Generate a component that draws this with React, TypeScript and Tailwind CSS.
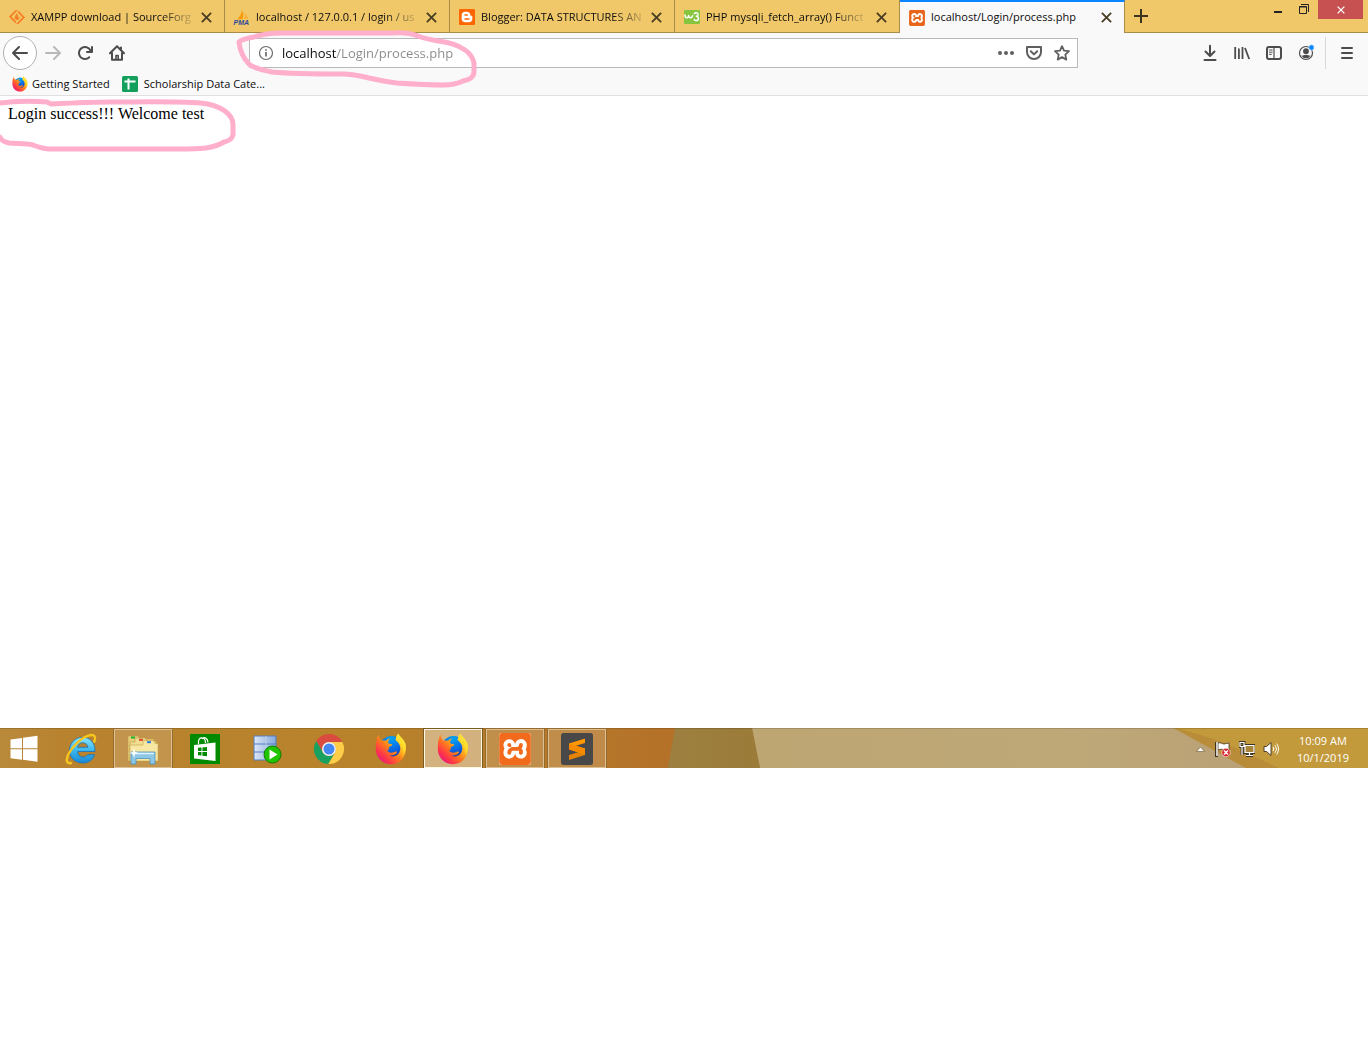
import type { ReactNode } from "react";
import { SiBlogger, SiSourceforge, SiXampp } from "react-icons/si";

function FirefoxLogo({ id, className }: { id: string; className: string }) {
  return (
    <svg viewBox="0 0 32 32" className={className} aria-hidden="true">
      <defs>
        <linearGradient id={`${id}-flame`} x1="0.9" y1="0.05" x2="0.1" y2="0.9">
          <stop offset="0" stopColor="#fff44f" />
          <stop offset="0.3" stopColor="#ffc321" />
          <stop offset="0.55" stopColor="#ff7a1c" />
          <stop offset="0.8" stopColor="#ff3647" />
          <stop offset="1" stopColor="#e31587" />
        </linearGradient>
        <radialGradient id={`${id}-globe`} cx="0.5" cy="0.1" r="0.9">
          <stop offset="0" stopColor="#00a5f5" />
          <stop offset="0.6" stopColor="#0a63e0" />
          <stop offset="1" stopColor="#1b2a8f" />
        </radialGradient>
      </defs>
      <circle cx="16.5" cy="14.5" r="11.5" fill={`url(#${id}-globe)`} />
      <path
        fill={`url(#${id}-flame)`}
        d="M3.5 1.500C4 4.500 5 6.500 6.500 7.700 8.500 7.300 10 7.500 11 7.800 12 6 14 5.500 15 5.500 13.200 7 13 9.500 13.500 10.500 15 11 17.300 11 17.300 11.700 17.300 13 14.200 13.500 13.700 14.500 14 16 14 17 12.200 17.600 13.500 20 17 20.200 19 19 20.500 18 22 18.500 22 19.300 21 22 17 23 14.500 22.500 19 25 24.800 22 25.300 16 25.500 11 22.500 9 20.500 7 21 4 21.500 2.500 23.300.600 24.500 4 29 6 30.500 11 32.500 20 27.500 31.200 16 31.200 7 31.200.800 24 .800 16 .800 11 1 6 3.500 1.500Z"
      />
      <path fill="#ffe12d" opacity="0.75" d="M23.300.600C24.500 4 29 6 30.500 11c.8 4-.2 8-2 11 .5-6-1-10-4-12.500-2-1.500-3.500-5-1.200-8.900Z" />
    </svg>
  );
}

function XamppLogo({ className }: { className: string }) {
  return (
    <span className="flex rounded-[3px] bg-white" aria-hidden="true">
      <SiXampp className={className} />
    </span>
  );
}

function PmaLogo() {
  return (
    <svg viewBox="0 0 16 16" className="size-4 shrink-0 overflow-visible" aria-hidden="true">
      <path fill="#f89c0e" d="M8 1c1.500 3 1.500 6 .8 9L3 10.500C5.500 8 7.500 5 8 1Z" />
      <path fill="#fbb03b" d="M10 3.500c2 2 3.500 4 4.500 6.200L10 10c.7-2 .6-4.500 0-6.500Z" />
      <text x="-0.5" y="16" fontSize="7" fontWeight="700" fontStyle="italic" fill="#2f4a9c" fontFamily="Liberation Sans, sans-serif">
        PMA
      </text>
    </svg>
  );
}

function W3Logo() {
  return (
    <svg viewBox="0 0 16 16" className="size-4 shrink-0" aria-hidden="true">
      <rect y="1" width="16" height="14" rx="1" fill="#87c540" />
      <path
        fill="none"
        stroke="#fff"
        strokeWidth="1.5"
        strokeLinecap="round"
        strokeLinejoin="round"
        d="M1 6c0 3.500 3.300 3.500 3.600.5.2 3 3.600 3 4 .2M10.300 4.600c1.600-1.800 4.400-.6 3.700 1.400-.3.700-1 1.100-1.700 1.200 2.800.2 2.800 4.200.2 4.400-1.100.1-1.900-.4-2.200-1.200"
      />
    </svg>
  );
}

const CloseMark = ({ className }: { className: string }) => (
  <svg viewBox="0 0 10 10" className={className} aria-hidden="true">
    <path d="M.8.800 9.200 9.200M9.200.8.800 9.200" stroke="currentColor" strokeWidth="1.7" fill="none" />
  </svg>
);

type Tab = { title: string; icon: ReactNode; active?: boolean };

const tabs: Tab[] = [
  { title: "XAMPP download | SourceForg", icon: <SiSourceforge className="size-4 shrink-0 text-[#f58025]" /> },
  { title: "localhost / 127.0.0.1 / login / us", icon: <PmaLogo /> },
  {
    title: "Blogger: DATA STRUCTURES AN",
    icon: (
      <span className="flex rounded bg-white">
        <SiBlogger className="size-4 shrink-0 text-[#ff6600]" />
      </span>
    ),
  },
  { title: "PHP mysqli_fetch_array() Funct", icon: <W3Logo /> },
  { title: "localhost/Login/process.php", icon: <XamppLogo className="size-4 text-[#e8641b]" />, active: true },
];

function TabStrip() {
  return (
    <header className="flex h-[33px] bg-[#f0c869]">
      <div role="tablist" aria-label="Open tabs" className="flex min-w-0">
        {tabs.map((tab) => (
          <div
            key={tab.title}
            className={
              tab.active
                ? "flex w-[225px] items-center border-t-2 border-r border-t-[#0a84ff] border-r-[#a88c4a] bg-[#f9f9fa] pr-3 pl-[9px]"
                : "flex w-[225px] items-center border-r border-b border-[#a88c4a] pt-[2px] pr-3 pl-[9px]"
            }
          >
            <button role="tab" aria-selected={!!tab.active} className="flex min-w-0 flex-1 items-center gap-1.5">
              {tab.icon}
              <span
                className={
                  tab.active
                    ? "text-left text-[11px] whitespace-nowrap"
                    : "bg-[linear-gradient(to_right,#0c0c0d_calc(100%-30px),#c3a55c)] bg-clip-text text-left text-[11px] whitespace-nowrap text-transparent"
                }
              >
                {tab.title}
              </span>
            </button>
            <button aria-label={`Close ${tab.title}`} className="ml-1.5 text-[#4a3f24]">
              <CloseMark className="size-[11px]" />
            </button>
          </div>
        ))}
      </div>
      <div className="flex flex-1 justify-between border-b border-[#a88c4a]">
        <button aria-label="New tab" className="px-[9px] text-[#3c3420]">
          <svg viewBox="0 0 14 14" className="size-3.5" aria-hidden="true">
            <path d="M7 0v14M0 7h14" stroke="currentColor" strokeWidth="2" />
          </svg>
        </button>
        <div className="flex items-start pr-[5px]">
          <button aria-label="Minimize" className="flex h-5 w-[26px] items-center justify-center pt-[3px]">
            <span className="h-[2px] w-2 bg-[#222]" />
          </button>
          <button aria-label="Restore" className="flex h-[18px] w-[26px] items-center justify-center">
            <svg viewBox="0 0 10 10" className="size-2.5" aria-hidden="true">
              <path d="M2 .5h7.500V8M.5 2.500h7v7h-7zM.5 3h7" fill="none" stroke="#222" />
            </svg>
          </button>
          <button aria-label="Close window" className="ml-[1px] flex h-[19px] w-[45px] items-center justify-center bg-[#c75050] text-white">
            <CloseMark className="size-2" />
          </button>
        </div>
      </div>
    </header>
  );
}

function ToolButton({ label, children }: { label: string; children: ReactNode }) {
  return (
    <button aria-label={label} className="flex size-8 shrink-0 items-center justify-center text-[#4c4c4d]">
      <svg viewBox="0 0 16 16" className="size-4 overflow-visible" fill="none" stroke="currentColor" strokeWidth="2" strokeLinecap="round" strokeLinejoin="round" aria-hidden="true">
        {children}
      </svg>
    </button>
  );
}

function Toolbar() {
  return (
    <div className="flex h-10 items-center pr-[5px] pl-[3px]">
      <button aria-label="Back" className="flex size-[34px] shrink-0 items-center justify-center rounded-full border border-[#b1b1b1] bg-white text-[#4c4c4d]">
        <svg viewBox="0 0 16 16" className="size-4" fill="currentColor" aria-hidden="true">
          <path d="M15 7H3.414l4.293-4.293a1 1 0 0 0-1.414-1.414l-6 6a1 1 0 0 0 0 1.414l6 6a1 1 0 0 0 1.414-1.414L3.414 9H15a1 1 0 0 0 0-2z" />
        </svg>
      </button>
      <button aria-label="Forward" disabled className="flex size-8 shrink-0 items-center justify-center text-[#b9b9ba]">
        <svg viewBox="0 0 16 16" className="size-4" fill="currentColor" aria-hidden="true">
          <path d="M15.707 7.293l-6-6a1 1 0 0 0-1.414 1.414L12.586 7H1a1 1 0 0 0 0 2h11.586l-4.293 4.293a1 1 0 1 0 1.414 1.414l6-6a1 1 0 0 0 0-1.414z" />
        </svg>
      </button>
      <ToolButton label="Reload">
        <path
          fill="currentColor"
          stroke="none"
          d="M15 1a1 1 0 0 0-1 1v2.418A6.995 6.995 0 1 0 8 15a6.954 6.954 0 0 0 4.950-2.050 1 1 0 0 0-1.414-1.414A5.019 5.019 0 1 1 12.549 6H10a1 1 0 0 0 0 2h5a1 1 0 0 0 1-1V2a1 1 0 0 0-1-1z"
        />
      </ToolButton>
      <ToolButton label="Home">
        <path d="M1 8.300 8 1.300l7 7M3 8v6.800h10V8M12 2.500v2" />
        <path d="M7 14.500v-4h2.200v4" strokeWidth="1.600" />
      </ToolButton>
      <div className="flex-[118]" />
      <form className="flex h-[30px] min-w-0 flex-[827] items-center border border-[#b9b9ba] bg-white pr-[7px] pl-2" onSubmit={(e) => e.preventDefault()}>
        <button type="button" aria-label="Site information" className="mr-2 text-[#6a6a6b]">
          <svg viewBox="0 0 16 16" className="size-4" fill="none" stroke="currentColor" aria-hidden="true">
            <circle cx="8" cy="8" r="6.500" strokeWidth="1.200" />
            <path d="M8 7v4.500M8 4.200v1.600" strokeWidth="1.700" />
          </svg>
        </button>
        <input
          aria-label="Address"
          defaultValue="localhost/Login/process.php"
          className="min-w-0 flex-1 bg-[linear-gradient(90deg,#0c0c0d_54px,#8a8a8c_54px)] bg-clip-text pt-[2px] text-[13px] text-transparent caret-black outline-none"
        />
        <div className="flex items-center gap-3 text-[#5f5f60]">
          <button type="button" aria-label="Page actions">
            <svg viewBox="0 0 16 16" className="size-4" fill="currentColor" aria-hidden="true">
              <circle cx="2" cy="8" r="2" />
              <circle cx="8" cy="8" r="2" />
              <circle cx="14" cy="8" r="2" />
            </svg>
          </button>
          <button type="button" aria-label="Save to Pocket">
            <svg viewBox="0 0 16 16" className="size-4" fill="none" stroke="currentColor" strokeWidth="2" strokeLinecap="round" strokeLinejoin="round" aria-hidden="true">
              <path d="M1 2h14v5a7 7 0 0 1-14 0zM4.800 6.300 8 9.400l3.200-3.100" />
            </svg>
          </button>
          <button type="button" aria-label="Bookmark this page">
            <svg viewBox="0 0 16 16" className="size-4" fill="none" stroke="currentColor" strokeWidth="1.800" strokeLinejoin="round" aria-hidden="true">
              <path d="m8 1.200 2 4.500 5 .5-3.700 3.400 1 5L8 12.100l-4.300 2.500 1-5L1 6.200l5-.5z" />
            </svg>
          </button>
        </div>
      </form>
      <div className="flex-[118]" />
      <ToolButton label="Downloads">
        <path d="M8 .800v9.500M3.500 6.500 8 11l4.500-4.500M2.500 15h11" />
      </ToolButton>
      <ToolButton label="Library">
        <path d="M1.200 2v12M4.900 3.500V14M8.500 2v12M11 3l4.200 11" strokeWidth="1.800" strokeLinecap="butt" />
      </ToolButton>
      <ToolButton label="Sidebars">
        <rect x="1" y="2" width="14" height="12" rx="2" />
        <path d="M8 2v12" strokeWidth="1.200" />
        <path d="M3.500 5h2.700M3.500 7.200h2.700M3.500 9.400h1.800" strokeWidth="1" />
      </ToolButton>
      <ToolButton label="Account">
        <circle cx="8" cy="8" r="6.500" strokeWidth="1.200" />
        <circle cx="8" cy="6.200" r="2.900" fill="currentColor" stroke="none" />
        <path d="M3.300 10.500c1.300.6 2.500-.8 4.700-.8s3.400 1.400 4.700.8a5.400 5.400 0 0 1-9.400 0z" fill="currentColor" stroke="none" />
        <circle cx="13.500" cy="2.500" r="2.700" fill="#0a84ff" stroke="#f9f9fa" strokeWidth="0.500" />
      </ToolButton>
      <div className="mr-[5px] ml-[3px] h-8 w-px bg-[#d7d7d8]" />
      <ToolButton label="Menu">
        <path d="M3 3h10M3 8h10M3 13h10" />
      </ToolButton>
    </div>
  );
}

function Bookmarks() {
  return (
    <nav aria-label="Bookmarks" className="flex h-[22px] items-center gap-3 px-3 text-[11px]">
      <a href="#getting-started" className="flex items-center gap-1">
        <FirefoxLogo id="bm" className="size-4" />
        Getting Started
      </a>
      <a href="#scholarship" className="flex items-center gap-1.5">
        <svg viewBox="0 0 16 16" className="size-4" aria-hidden="true">
          <rect width="16" height="16" rx="1.500" fill="#12a05c" />
          <path d="M2.500 5.500h11M6.500 2.500v11" stroke="#fff" strokeWidth="2" />
        </svg>
        Scholarship Data Cate...
      </a>
    </nav>
  );
}

function Annotations() {
  return (
    <svg viewBox="0 0 480 160" className="pointer-events-none absolute top-0 left-0 h-[160px] w-[480px]" fill="none" stroke="#ffaecb" strokeWidth="5" strokeLinecap="round" strokeLinejoin="round" aria-hidden="true">
      <path d="M239 42c3-3 9-4 15-5 9-3 18-4 27-4h112c10-1 18 0 25 3 8 3 14 4 20 5 10 1 20 4 27 9 6 4 8 8 9 13v9c0 5-5 8-11 9-6 3-12 4-20 4-15 0-31-1-46-2-10-1-19-3-28-5-8-2-17-4-27-4-24 0-49 0-70-2-10-2-19-4-23-8-6-6-9-13-10-22z" />
      <path d="M0 103c15-2 31-2 47-1l4 2c20-1 40-2 60-2 30 0 62-1 90 1 11 1 18 4 24 8 5 4 8 8 8 13v11c-1 4-4 6-9 7-5 3-11 5-18 6-9 1-18 1-27 1H50c-7 0-12-2-17-4-8-2-16-1-24-2-5-1-8-3-9-6" />
    </svg>
  );
}

const Windows = (
  <svg viewBox="0 0 28 28" className="size-7" fill="#fff" aria-hidden="true">
    <path d="M.5 4.500 12 3v10.300H.5zM13 2.800 27.500.8v12.500H13zM.5 14.300H12V24.700L.5 23.200zM13 14.300h14.500v12.400L13 24.800z" />
  </svg>
);

const Explorer = (
  <svg viewBox="0 0 34 32" className="h-8 w-[34px]" aria-hidden="true">
    <path d="M2 3h10l2 3h14v22H2z" fill="#e9cf7c" stroke="#b9993f" strokeWidth=".6" />
    <path d="M5 3.500h4v2H5z" fill="#16b32c" />
    <path d="M9 5h10l2 3h9v20H4V9h5z" fill="#f3dd90" stroke="#b9993f" strokeWidth=".6" />
    <path d="M13 5.800h4v2h-4z" fill="#d9452b" />
    <path d="M17 7.500h10l2 3h3V28H4V12h13z" fill="#f8e7a2" stroke="#c3a34a" strokeWidth=".6" />
    <path d="M21 8.200h4v2h-4z" fill="#2d7fd8" />
    <path d="M5 19h24v12h-5v-5.500H10V31H5z" fill="#8ec6e6" stroke="#4c93bf" strokeWidth=".8" />
    <path d="M6 20.500h22" stroke="#dff3fc" strokeWidth="1.500" />
    <path d="m8 15 1 4 4 1-4 1-1 4-1-4-4-1 4-1z" fill="#fff" />
  </svg>
);

const InternetExplorer = (
  <svg viewBox="0 0 32 32" className="size-8" fill="none" aria-hidden="true">
    <defs>
      <linearGradient id="ie-blue" x1="0" y1="0" x2="0" y2="1">
        <stop offset="0" stopColor="#8be6fb" />
        <stop offset="0.5" stopColor="#3cb8ee" />
        <stop offset="1" stopColor="#1a87d4" />
      </linearGradient>
    </defs>
    <path
      d="M30 18.500H12.500c.3 3.500 2.500 5.500 5.500 5.500 2.200 0 3.600-.8 4.500-2.300h7C28 27 23.500 30 17.800 30 10 30 4.500 24.700 4.500 17.500S10 4.300 17.500 4.300 30.300 9.800 30 18.500ZM12.600 14.300h10.300c-.3-2.700-2.300-4.500-5.200-4.500s-4.700 1.800-5.100 4.500Z"
      fill="url(#ie-blue)"
      stroke="#1672b8"
      strokeWidth=".8"
    />
    <path d="M6 30c-4.500 1-5.500-3-2.500-9C7.500 13 17 4 25 2.200c5-1 6 2 4.200 6.500" stroke="#f8c51d" strokeWidth="2.400" strokeLinecap="round" />
  </svg>
);

const Store = (
  <svg viewBox="0 0 30 30" className="size-[30px]" aria-hidden="true">
    <path fill="#008a00" d="M0 0h30v30H0z" />
    <path d="M8.500 10C8 5 10 3.500 12.500 4c2.500.5 3 2.500 3 5M12 5c2-2.500 6-1 6 3.500" fill="none" stroke="#fff" strokeWidth="1.200" />
    <path fill="#fff" d="M4 11 25.500 8.500V27L4 24.500z" />
    <path fill="#008a00" d="m8 13.800 3.500-.3v3.600H8zM12.400 13.400l4.600-.4v4.100h-4.600zM8 18h3.500v3.600L8 21.300zM12.400 18H17v4.200l-4.600-.5z" />
  </svg>
);

const SqlServer = (
  <svg viewBox="0 0 30 30" className="size-[30px]" aria-hidden="true">
    <defs>
      <linearGradient id="db" x1="0" x2="1">
        <stop offset="0" stopColor="#dce6f5" />
        <stop offset="1" stopColor="#84a9dc" />
      </linearGradient>
    </defs>
    <path d="M2 2h22v24H2z" fill="url(#db)" stroke="#537fc0" />
    <path d="M2 10h22M2 18h22" stroke="#537fc0" strokeWidth="1.200" />
    <path d="M14 2v24" stroke="#c4d4ec" strokeWidth=".8" />
    <circle cx="20.500" cy="20.500" r="8.500" fill="#1fc500" stroke="#0e7c04" />
    <path d="M17.500 15.500v10l8-5z" fill="#fff" />
  </svg>
);

const Chrome = (
  <svg viewBox="0 0 32 32" className="size-8" aria-hidden="true">
    <path fill="#db4a3f" d="M16 9H29.270A15 15 0 0 0 3.300 8L9.940 19.500A7 7 0 0 1 16 9Z" />
    <path fill="#1aa15f" d="M9.940 19.500 3.300 8A15 15 0 0 0 15.400 31L22.060 19.500A7 7 0 0 1 9.940 19.500Z" />
    <path fill="#ffce48" d="M22.060 19.500 15.400 31A15 15 0 0 0 29.270 9H16A7 7 0 0 1 22.060 19.500Z" />
    <circle cx="16" cy="16" r="7" fill="#f2f2f2" />
    <circle cx="16" cy="16" r="5.500" fill="#4587f3" />
  </svg>
);

const Sublime = (
  <svg viewBox="0 0 32 32" className="size-8" aria-hidden="true">
    <rect width="32" height="32" rx="2.500" fill="#484848" />
    <path fill="#ff9800" d="M24 5.500 8 10.500v6l16 5v-6l-9-2.800 9-2.700z" />
    <path fill="#f58a00" d="m8 16.500 9 2.800-9 2.700v5l16-5v-6.500L8 10.500z" opacity=".9" />
    <path fill="#484848" d="m24 10.500-7 2.200 7 2.200zM8 17v4.500l7-2.200z" />
  </svg>
);

type App = { name: string; icon: ReactNode; state: "idle" | "open" | "active" };

const apps: App[] = [
  { name: "Internet Explorer", icon: InternetExplorer, state: "idle" },
  { name: "File Explorer", icon: Explorer, state: "open" },
  { name: "Store", icon: Store, state: "idle" },
  { name: "Database", icon: SqlServer, state: "idle" },
  { name: "Chrome", icon: Chrome, state: "idle" },
  { name: "Firefox", icon: <FirefoxLogo id="ff1" className="size-8" />, state: "idle" },
  { name: "Firefox window", icon: <FirefoxLogo id="ff2" className="size-8" />, state: "active" },
  { name: "XAMPP Control Panel", icon: <XamppLogo className="size-8 text-[#f26a1b]" />, state: "open" },
  { name: "Sublime Text", icon: Sublime, state: "open" },
];

const appStyles = {
  idle: "flex h-[39px] w-[58px] items-center justify-center",
  open: "flex h-[39px] w-[58px] items-center justify-center border border-[#dcbf92] bg-white/15 outline outline-[#966b2b]",
  active: "flex h-[39px] w-[58px] items-center justify-center border border-[#fff6e4] bg-white/40 outline outline-[#7d5a22]",
};

function Wallpaper() {
  return (
    <svg viewBox="0 0 1366 40" preserveAspectRatio="none" className="absolute inset-0 size-full" aria-hidden="true">
      <defs>
        <linearGradient id="w-left">
          <stop offset="0" stopColor="#b98a3b" />
          <stop offset="0.09" stopColor="#b8822f" />
          <stop offset="0.5" stopColor="#b8832b" />
          <stop offset="0.85" stopColor="#b5782b" />
          <stop offset="1" stopColor="#b47027" />
        </linearGradient>
        <linearGradient id="w-tan">
          <stop offset="0" stopColor="#bda672" />
          <stop offset="0.5" stopColor="#bfa878" />
          <stop offset="1" stopColor="#b59c74" />
        </linearGradient>
        <linearGradient id="w-olive">
          <stop offset="0" stopColor="#9d8040" />
          <stop offset="1" stopColor="#9b7b38" />
        </linearGradient>
      </defs>
      <path fill="url(#w-left)" d="M0 0h680v40H0z" />
      <path fill="url(#w-olive)" d="M674 0h82l4 40h-93z" />
      <path fill="url(#w-tan)" d="M751 0h615v40H759z" />
      <path fill="#c29a3b" d="M1172 0h194v40h-120z" />
      <path fill="#b88c38" d="M1172 0c40 8 70 24 105 40h-33z" />
      <path fill="#000" opacity="0.15" d="M0 0h1366v1H0z" />
    </svg>
  );
}

function Taskbar() {
  return (
    <footer className="relative h-10 overflow-hidden">
      <Wallpaper />
      <div className="relative flex h-full items-center justify-between pt-px text-white">
        <div className="flex items-center gap-1">
          <button aria-label="Start" className="flex h-10 w-12 items-center justify-center">
            {Windows}
          </button>
          {apps.map((app) => (
            <button key={app.name} aria-label={app.name} className={appStyles[app.state]}>
              {app.icon}
            </button>
          ))}
        </div>
        <div className="flex items-center gap-2 pr-[19px]">
          <button aria-label="Show hidden icons" className="px-0.5">
            <svg viewBox="0 0 9 6" className="h-1.5 w-[9px]" aria-hidden="true">
              <path d="M.5 5.500h8L4.500 1z" fill="#fff" stroke="#6d5a36" strokeWidth=".6" />
            </svg>
          </button>
          <button aria-label="Action center">
            <svg viewBox="0 0 16 16" className="size-4" aria-hidden="true">
              <path d="M1.500 1v15" stroke="#3f3320" strokeWidth="3" />
              <path d="M3 2c3-1 4 1 6 1s3-1 5-1v7c-3 0-4 1-5 0s-4-1-6 0z" fill="#fff" stroke="#3f3320" strokeWidth=".8" />
              <path d="M2 1v14" stroke="#fff" strokeWidth="1.500" />
              <circle cx="11" cy="11.500" r="4.300" fill="#d9282f" stroke="#fff" strokeWidth=".6" />
              <path d="m9 9.500 4 4m0-4-4 4" stroke="#fff" strokeWidth="1.400" />
            </svg>
          </button>
          <button aria-label="Network">
            <svg viewBox="0 0 16 16" className="size-4" fill="none" aria-hidden="true">
              <path d="M6 4.500h9v7H6zM10.500 11.500v3M7 14.500h7M1 1.500h4v4H1zM3 5.500V14" stroke="#3f3320" strokeWidth="2.800" />
              <path d="M6 4.500h9v7H6z" fill="#a98439" />
              <path d="M6 4.500h9v7H6zM10.500 11.500v3M7 14.500h7M1 1.500h4v4H1zM3 5.500V14" stroke="#fff" strokeWidth="1.200" />
            </svg>
          </button>
          <button aria-label="Volume">
            <svg viewBox="0 0 16 16" className="size-4" fill="none" aria-hidden="true">
              <path d="M1 5.500h2.500L8 1.500v13L3.500 10.500H1z" fill="#fff" stroke="#3f3320" strokeWidth=".9" />
              <path d="M10 6c1 1.300 1 2.700 0 4M11.800 4.200c2 2.300 2 5.300 0 7.600M13.600 2.500c2.500 3.300 2.500 7.700 0 11" stroke="#fff" strokeWidth="1" />
            </svg>
          </button>
          <div className="pl-2.5 text-center text-[11px] leading-[17px]">
            <p>10:09 AM</p>
            <p>10/1/2019</p>
          </div>
        </div>
      </div>
    </footer>
  );
}

export default function App() {
  return (
    <div className="relative min-h-screen bg-white font-['Open_Sans','Noto_Sans',sans-serif] text-[#0c0c0d]">
      <TabStrip />
      <div className="border-b border-[#e0e0e1] bg-[#f9f9fa]">
        <Toolbar />
        <Bookmarks />
      </div>
      <main className="min-h-[632px] p-2 font-['Liberation_Serif',serif] text-base text-black">
        <p className="leading-5">Login success!!! Welcome test</p>
      </main>
      <Taskbar />
      <Annotations />
    </div>
  );
}
